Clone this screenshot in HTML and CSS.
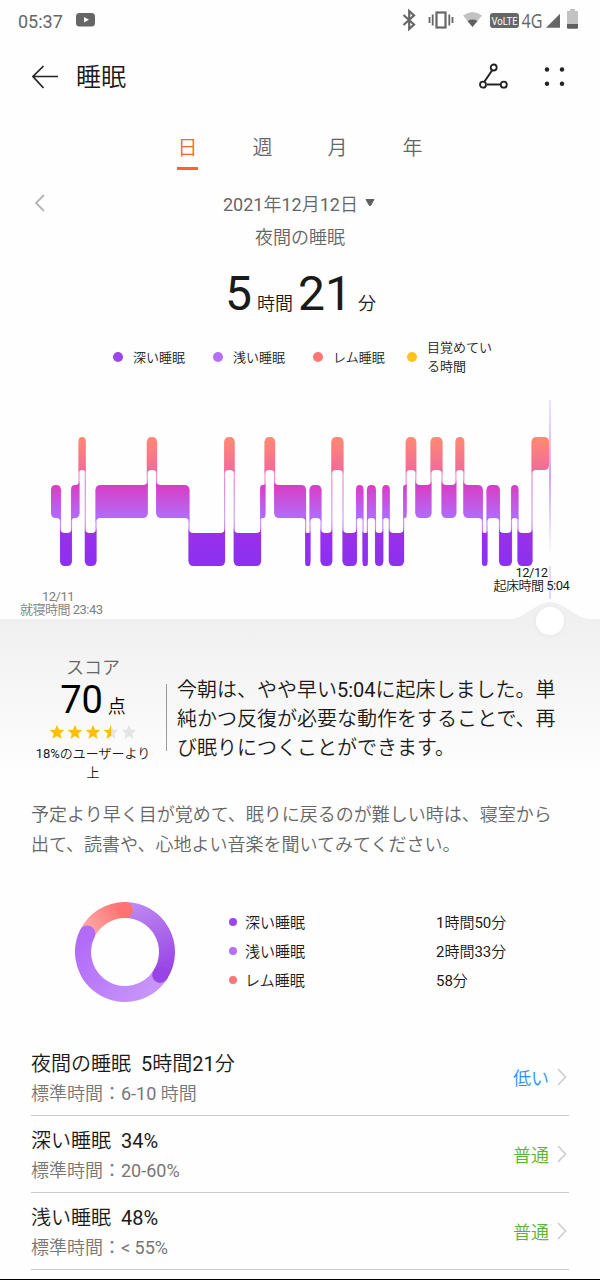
FILE: index.html
```html
<!DOCTYPE html>
<html lang="ja">
<head>
    <meta charset="utf-8">
    <title>睡眠</title>
    <link rel="stylesheet" href="styles.css">
</head>
<body>
    <div class="status-bar">
        <span class="clock">05:37</span>
        <svg class="video-icon" width="20" height="14" viewBox="0 0 20 14"><rect width="19" height="13.5" rx="3.5" fill="#666"/><path d="M8 4v5.6l5-2.8z" fill="#fff"/></svg>
        <div class="status-right">
            <svg width="110" height="40" viewBox="400 0 110 40" class="signals">
                <path d="M403.5 15l10.5 9.500-4.800 4.500v-18l4.800 4.500-10.500 9.500" fill="none" stroke="#666" stroke-width="2.200"/>
                <rect x="436.500" y="12.500" width="9" height="15" fill="none" stroke="#666" stroke-width="2.200"/>
                <path d="M432.700 14.500v11M429.500 17v6M449.300 14.500v11M452.500 17v6" stroke="#666" stroke-width="1.800"/>
                <path d="M463 15.500q9.500-7 19 0l-9.500 11.500z" fill="#c2c2c2"/>
                <path d="M467.500 21q5-2.800 10 0l-5 6z" fill="#606060"/>
                <rect x="490" y="13" width="29" height="15" rx="3" fill="#666"/>
                <text class="volte" x="491.500" y="25.200" textLength="26" lengthAdjust="spacingAndGlyphs">VoLTE</text>
                <text class="network" x="521.500" y="27.600" textLength="21" lengthAdjust="spacingAndGlyphs">4G</text>
                <path d="M546 27.800h14v-14z" fill="#666"/>
                <path d="M567 11h3V9h5v2h3v14h-11z" fill="#c2c2c2"/>
                <path d="M567 24h11v3.500q0 1.300-1.300 1.300h-8.400q-1.300 0-1.300-1.300z" fill="#606060"/>
            </svg>
        </div>
    </div>

    <header class="title-bar">
        <svg width="26" height="24" viewBox="0 0 26 24"><path d="M11.500 1L1 11.500 11.500 23M1 11.500h25" fill="none" stroke="#222" stroke-width="1.700"/></svg>
        <h1>睡眠</h1>
        <svg class="share-icon" width="30" height="28" viewBox="0 0 30 28"><path d="M5.500 18.500L13 7.500M8 21.500h13" stroke="#222" stroke-width="2"/><g fill="none" stroke="#222" stroke-width="1.800"><circle cx="14.700" cy="4.500" r="3"/><circle cx="4" cy="21.700" r="3"/><circle cx="24.800" cy="21.700" r="3"/></g></svg>
        <svg width="22" height="22" viewBox="0 0 22 22" fill="#222"><circle cx="4" cy="3.500" r="2.200"/><circle cx="19" cy="3.500" r="2.200"/><circle cx="4" cy="17.800" r="2.200"/><circle cx="19" cy="17.800" r="2.200"/></svg>
    </header>

    <nav class="tabs">
        <span class="tab active">日</span>
        <span class="tab">週</span>
        <span class="tab">月</span>
        <span class="tab">年</span>
    </nav>

    <div class="date-row">
        <svg class="prev" width="12" height="18" viewBox="0 0 12 18"><path d="M10 1L2 9l8 8" fill="none" stroke="#b4b4b4" stroke-width="1.800"/></svg>
        <span>2021年12月12日</span>
        <svg width="10" height="8" viewBox="0 0 10 8"><path d="M1 .5h8L5.600 6.500q-.6.800-1.200 0z" fill="#606060" stroke="#606060"/></svg>
    </div>
    <div class="subtitle">夜間の睡眠</div>
    <div class="total"><b>5</b><span class="hours">時間</span><b>21</b><span class="minutes">分</span></div>

    <div class="legend">
        <span class="legend-item"><i class="dot deep"></i>深い睡眠</span>
        <span class="legend-item"><i class="dot light"></i>浅い睡眠</span>
        <span class="legend-item"><i class="dot rem"></i>レム睡眠</span>
        <span class="legend-item awake-item"><i class="dot awake"></i><span>目覚めてい<br>る時間</span></span>
    </div>

    <section class="chart">
        <svg width="600" height="239" viewBox="0 381 600 239">
            <defs>
                <linearGradient id="stage" gradientUnits="userSpaceOnUse" x1="0" y1="437" x2="0" y2="566">
                    <stop offset="0" stop-color="#ff8a72"/>
                    <stop offset=".25" stop-color="#f16d97"/>
                    <stop offset=".375" stop-color="#d93dc4"/>
                    <stop offset=".62" stop-color="#b16bfa"/>
                    <stop offset=".745" stop-color="#9930e9"/>
                    <stop offset="1" stop-color="#8b30f2"/>
                </linearGradient>
                <linearGradient id="cursor" gradientUnits="userSpaceOnUse" x1="0" y1="400" x2="0" y2="556">
                    <stop offset="0" stop-color="#efe3fc"/>
                    <stop offset=".5" stop-color="#cda6f6"/>
                    <stop offset="1" stop-color="#fefefe"/>
                </linearGradient>
            </defs>
            <g id="stages"></g>
            <rect x="549" y="400" width="2" height="156" fill="url(#cursor)"/>
            <rect x="549" y="566" width="2" height="33" fill="#e6d7fb"/>
            <path d="M0 619.200H508C526 619 535 602 550 602S575 619 592 619.200H600V621H0z" fill="#f0f0f0"/>
        </svg>
        <div class="bed-time">12/11<br>就寝時間 23:43</div>
        <div class="wake-time">12/12<br>起床時間 5:04</div>
        <div class="knob"></div>
    </section>

    <section class="score">
        <div class="score-left">
            <div class="score-label">スコア</div>
            <div class="score-value">70<span>点</span></div>
            <svg class="stars" width="90" height="16" viewBox="0 0 90 16">
                <defs>
                    <path id="star" d="M8 .8l2 4.900 5.300.4-4 3.500 1.200 5.200L8 12l-4.500 2.800 1.200-5.200-4-3.500 5.300-.4z"/>
                    <clipPath id="half"><rect width="8" height="16"/></clipPath>
                </defs>
                <use href="#star" fill="#ffbf00"/>
                <use href="#star" x="18" fill="#ffbf00"/>
                <use href="#star" x="36" fill="#ffbf00"/>
                <use href="#star" x="54" fill="#e4e4e4"/>
                <g transform="translate(54)"><use href="#star" fill="#ffbf00" clip-path="url(#half)"/></g>
                <use href="#star" x="72" fill="#e4e4e4"/>
            </svg>
            <div class="rank">18%のユーザーより<br>上</div>
        </div>
        <div class="divider"></div>
        <p class="summary">今朝は、やや早い5:04に起床しました。単<br>純かつ反復が必要な動作をすることで、再<br>び眠りにつくことができます。</p>
    </section>

    <p class="advice">予定より早く目が覚めて、眠りに戻るのが難しい時は、寝室から<br>出て、読書や、心地よい音楽を聞いてみてください。</p>

    <section class="breakdown">
        <svg width="100" height="100" viewBox="75 902 100 100" fill="none" stroke-width="16">
            <defs>
                <linearGradient id="g-deep" gradientUnits="userSpaceOnUse" x1="132" y1="905" x2="160" y2="975"><stop stop-color="#bd88f2"/><stop offset="1" stop-color="#9844e6"/></linearGradient>
                <linearGradient id="g-light" gradientUnits="userSpaceOnUse" x1="158" y1="985" x2="88" y2="933"><stop stop-color="#c896fa"/><stop offset="1" stop-color="#b26cf9"/></linearGradient>
                <linearGradient id="g-rem" gradientUnits="userSpaceOnUse" x1="90" y1="930" x2="122" y2="910"><stop stop-color="#ffa5a2"/><stop offset="1" stop-color="#ff7274"/></linearGradient>
            </defs>
            <path d="M125 910A42 42 0 0 1 160.200 974.900" stroke="url(#g-deep)"/>
            <path d="M160.200 974.900A42 42 0 0 1 87.300 933.500" stroke="url(#g-light)"/>
            <path d="M87.300 933.500A42 42 0 0 1 125 910" stroke="url(#g-rem)"/>
            <circle cx="160.200" cy="974.900" r="8" fill="#9844e6" stroke="none"/>
            <circle cx="87.300" cy="933.500" r="8" fill="#b26cf9" stroke="none"/>
            <circle cx="125" cy="910" r="8" fill="#ff7274" stroke="none"/>
        </svg>
        <div class="breakdown-list">
            <div class="breakdown-row"><i class="dot deep"></i><span>深い睡眠</span><span>1時間50分</span></div>
            <div class="breakdown-row"><i class="dot light"></i><span>浅い睡眠</span><span>2時間33分</span></div>
            <div class="breakdown-row"><i class="dot rem"></i><span>レム睡眠</span><span>58分</span></div>
        </div>
    </section>

    <section class="details">
        <div class="detail">
            <div><div class="name">夜間の睡眠<span>5時間21分</span></div><div class="range">標準時間：6-10 時間</div></div>
            <span class="rating low">低い</span>
            <svg width="10" height="18" viewBox="0 0 10 18"><path d="M1 1l7.500 8L1 17" fill="none" stroke="#d0d0d0" stroke-width="1.800"/></svg>
        </div>
        <div class="detail">
            <div><div class="name">深い睡眠<span>34%</span></div><div class="range">標準時間：20-60%</div></div>
            <span class="rating">普通</span>
            <svg width="10" height="18" viewBox="0 0 10 18"><path d="M1 1l7.500 8L1 17" fill="none" stroke="#d0d0d0" stroke-width="1.800"/></svg>
        </div>
        <div class="detail">
            <div><div class="name">浅い睡眠<span>48%</span></div><div class="range">標準時間：&lt; 55%</div></div>
            <span class="rating">普通</span>
            <svg width="10" height="18" viewBox="0 0 10 18"><path d="M1 1l7.500 8L1 17" fill="none" stroke="#d0d0d0" stroke-width="1.800"/></svg>
        </div>
    </section>
    <div class="bottom-edge"></div>
    <script src="chart.js"></script>
</body>
</html>
```
FILE: styles.css
```css
* {
    box-sizing: border-box;
}
body {
    margin: 0;
    width: 600px;
    height: 1280px;
    overflow: hidden;
    display: flex;
    flex-direction: column;
    background: #fefefe;
    color: #1a1a1a;
    font-family: Roboto, "Noto Sans CJK JP DemiLight", "Noto Sans CJK JP", sans-serif;
    font-weight: 380;
}
body > * {
    flex-shrink: 0;
}
svg {
    display: block;
    flex-shrink: 0;
}
p, h1 {
    margin: 0;
}

.status-bar {
    display: flex;
    align-items: center;
    height: 40px;
    padding-left: 18px;
    color: #666;
}
.clock {
    font-size: 18px;
    font-weight: 450;
    line-height: 20px;
    padding-top: 3px;
    width: 58px;
}
.status-right {
    width: 200px;
    margin-left: auto;
}
.signals {
    overflow: visible;
}
.volte {
    font: 11px Roboto, sans-serif;
    fill: #fff;
}
.network {
    font: 20px "Open Sans", sans-serif;
    fill: #666;
}

.title-bar {
    display: flex;
    align-items: center;
    height: 72px;
    padding: 1px 35px 0 32px;
}
.title-bar h1 {
    flex: 1;
    margin-left: 18px;
    padding-top: 2px;
    font-size: 25px;
    font-weight: 380;
    line-height: 36px;
}
.share-icon {
    margin-right: 34px;
}

.tabs {
    display: flex;
    justify-content: center;
    gap: 54px;
    height: 58px;
    padding-top: 21px;
}
.tab {
    width: 21px;
    font-size: 20px;
    line-height: 30px;
    color: #666;
    text-align: center;
}
.tab.active {
    color: #ff6522;
    border-bottom: 3px solid #ff6522;
}

.date-row {
    display: flex;
    align-items: center;
    height: 34px;
    margin-top: 16px;
    padding-left: 34px;
    font-size: 18px;
    color: #666;
}
.date-row span {
    margin: 0 7px 0 177px;
}
.subtitle {
    height: 31px;
    padding-top: 3px;
    line-height: 30px;
    font-size: 18px;
    color: #666;
    text-align: center;
}
.total {
    display: flex;
    align-items: baseline;
    height: 80px;
    padding: 15px 0 0 225px;
    line-height: 56px;
    font-size: 18px;
}
.total b {
    font-size: 48px;
    font-weight: 380;
}
.hours {
    margin: 0 5px;
}
.minutes {
    margin-left: 6px;
}

.dot {
    display: inline-block;
    flex-shrink: 0;
    width: 10px;
    height: 10px;
    border-radius: 50%;
}
.deep { background: #9a46ea; }
.light { background: #b56ffb; }
.rem { background: #ff7676; }
.awake { background: #ffc11e; }

.legend {
    display: flex;
    align-items: center;
    height: 50px;
    padding: 2px 0 0 113px;
    font-size: 13px;
    line-height: 19px;
}
.legend-item {
    display: flex;
    align-items: center;
    gap: 10px;
    width: 100px;
}
.awake-item {
    margin-left: -6px;
}

.chart {
    position: relative;
    height: 238px;
    font-size: 13px;
    line-height: 13px;
    text-align: center;
}
.bed-time {
    position: absolute;
    left: 20px;
    top: 209px;
    width: 76px;
    color: #808080;
    letter-spacing: -.5px;
    white-space: nowrap;
}
.wake-time {
    position: absolute;
    left: 490px;
    top: 185px;
    width: 83px;
    letter-spacing: -.5px;
    white-space: nowrap;
}
.knob {
    position: absolute;
    left: 536px;
    top: 226px;
    width: 28px;
    height: 28px;
    border-radius: 50%;
    background: #fff;
    box-shadow: 0 1px 4px #0000000c;
}

.score {
    display: flex;
    height: 176px;
    padding: 34px 0 0 31px;
    background: linear-gradient(#f0f0f0, #fefefe 158px);
}
.score-left {
    width: 124px;
    text-align: center;
}
.score-label {
    height: 26px;
    padding-top: 1px;
    font-size: 18px;
    line-height: 28px;
    color: #666;
}
.score-value {
    height: 42px;
    font-size: 38px;
    font-weight: 400;
    line-height: 42px;
    color: #000;
}
.score-value span {
    font-size: 18px;
    font-weight: 380;
    margin-left: 5px;
}
.stars {
    margin: 3px 0 4px 18px;
}
.rank {
    font-size: 13px;
    line-height: 19px;
    white-space: nowrap;
}
.divider {
    width: 1px;
    height: 67px;
    margin: 31px 10px 0 11px;
    background: #999;
}
.summary {
    padding-top: 23px;
    font-size: 20px;
    line-height: 29px;
    white-space: nowrap;
}
.advice {
    height: 90px;
    padding: 5px 0 0 31px;
    font-size: 18px;
    line-height: 30px;
    color: #666;
    white-space: nowrap;
}

.breakdown {
    display: flex;
    gap: 54px;
    height: 154px;
    padding: 17px 0 0 75px;
}
.breakdown-list {
    padding-top: 5px;
    font-size: 15px;
}
.breakdown-row {
    display: grid;
    grid-template-columns: 16px 191px auto;
    align-items: center;
    height: 29px;
}
.breakdown-row .dot {
    width: 8px;
    height: 8px;
}

.details {
    padding: 0 31px;
}
.detail {
    display: flex;
    align-items: center;
    height: 77px;
    padding-right: 2px;
    border-bottom: 1px solid #ccc;
}
.detail .name {
    padding-top: 2px;
    font-size: 20px;
    line-height: 32px;
}
.name span {
    margin-left: 10px;
}
.detail .range {
    font-size: 18px;
    line-height: 28px;
    color: #777;
}
.rating {
    margin: 0 8px 0 auto;
    padding-bottom: 1px;
    font-size: 18px;
    color: #5bb431;
}
.rating.low {
    color: #2090ff;
}
.bottom-edge {
    height: 2px;
    margin-top: auto;
    background: linear-gradient(#fefefe 50%, #000 50%);
}
```
FILE: chart.js
```js
// top edge of each sleep stage band
const TOP = { R: 437, L: 485, D: 533 };
const H = 33;
const START = 51;

// [stage, x where it ends]
const stages = [
    ['L', 60.5], ['D', 71.5], ['L', 79], ['R', 85.3], ['D', 96], ['L', 147.3],
    ['R', 156.6], ['L', 189], ['D', 224.6], ['R', 234.2], ['D', 260.6], ['L', 265],
    ['R', 274.6], ['L', 305.6], ['D', 310], ['L', 321], ['D', 331.8], ['R', 343],
    ['D', 356.5], ['L', 363], ['D', 367.4], ['L', 375.5], ['D', 382.8], ['L', 389.3],
    ['D', 403.6], ['L', 406.2], ['R', 415.8], ['L', 431], ['R', 442], ['L', 455.9],
    ['R', 463.8], ['L', 482.4], ['D', 487], ['L', 499.5], ['D', 511.5], ['L', 518],
    ['D', 532], ['R', 549]
];

let blocks = '';
let joins = '';
let x = START;

stages.forEach(([stage, end], i) => {
    const y = TOP[stage];
    const b = y + H;
    const prev = i ? TOP[stages[i - 1][0]] : null;
    const next = i < stages.length - 1 ? TOP[stages[i + 1][0]] : null;
    const left = x - (prev !== null ? 0.4 : 0);
    const right = end + (next !== null ? 0.4 : 0);
    const r = Math.min(5, (right - left) / 2);

    // corners curl outwards on the side that the neighbouring stage is on
    const tl = prev !== null && prev < y ? -r : r;
    const tr = next !== null && next < y ? -r : r;
    const bl = prev !== null && prev > y ? -r : r;
    const br = next !== null && next > y ? -r : r;

    blocks += `M${left} ${y + tl}Q${left} ${y} ${left + r} ${y}H${right - r}Q${right} ${y} ${right} ${y + tr}` +
        `V${b - br}Q${right} ${b} ${right - r} ${b}H${left + r}Q${left} ${b} ${left} ${b - bl}Z`;

    if (next !== null) {
        joins += `<rect x="${end - 0.6}" y="${Math.min(y, next) + 4}" width="1.2" height="${Math.abs(next - y) + H - 8}"/>`;
    }
    x = end;
});

document.getElementById('stages').innerHTML =
    `<g fill="url(#stage)" opacity=".6">${joins}</g><path d="${blocks}" fill="url(#stage)"/>`;
```
